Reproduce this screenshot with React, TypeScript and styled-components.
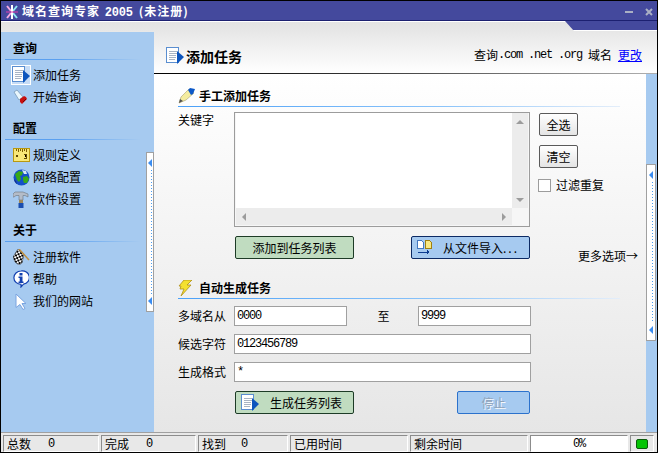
import React from 'react';
import styled, { createGlobalStyle } from 'styled-components';

const GlobalStyle = createGlobalStyle`
  html, body {
    margin: 0;
    padding: 0;
    background: #fff;
  }
  * {
    box-sizing: border-box;
  }
`;

const CJK = `'Noto Sans CJK SC', 'Liberation Sans', sans-serif`;
const MONO = `'Liberation Mono', 'Noto Sans CJK SC', monospace`;

const Window = styled.div`
  display: flex;
  flex-direction: column;
  width: 658px;
  height: 453px;
  overflow: hidden;
  border-left: 1px solid #000;
  border-right: 1px solid #000;
  border-bottom: 1px solid #000;
  background: #44499d;
  font-family: ${CJK};
  font-size: 12px;
  line-height: 16px;
  color: #000;
`;

const TitleBar = styled.div`
  display: flex;
  align-items: center;
  height: 21px;
  flex-shrink: 0;
  border-top: 1px solid #000;
  border-bottom: 1px solid #1c2070;
  padding: 3px 0 0 4px;
  background: #44499d;
`;

const TitleText = styled.span`
  margin-left: 3px;
  font-weight: 700;
  letter-spacing: 1px;
  color: #fff;
  white-space: nowrap;
`;

const TitleNum = styled.span`
  font-family: ${MONO};
  font-size: 12px;
  letter-spacing: -0.2px;
  margin: 0 6px 0 1px;
`;

const WindowButtons = styled.div`
  display: flex;
  align-items: center;
  gap: 12px;
  margin-left: auto;
  padding-right: 4px;
`;

const TopStrip = styled.div`
  height: 10px;
  flex-shrink: 0;
  background: linear-gradient(to bottom, #44499d 0, #44499d 9px, #fff 9px);
`;

const StripFace = styled.div`
  width: 573px;
  height: 100%;
  border-top: 1px solid #fff;
  background: linear-gradient(to bottom, #e3e3e3, #e7e7e7);
  clip-path: polygon(0 0, 564px 0, 573px 100%, 0 100%);
`;

const Workspace = styled.div`
  display: flex;
  flex: 1;
  min-height: 0;
  background: #e8e8e8;
`;

const Sidebar = styled.nav`
  position: relative;
  width: 153px;
  flex-shrink: 0;
  margin-top: 1px;
  padding-top: 8px;
  background: #a6caf0;
`;

const SideSection = styled.section`
  margin-bottom: 12px;
`;

const SideTitle = styled.div`
  height: 20px;
  margin: 0 14px 0 4px;
  padding-left: 8px;
  font-weight: 700;
  line-height: 16px;
  border-bottom: 1px solid transparent;
  border-image: linear-gradient(to right, #5aa0f0, #5aa0f0 40%, #a6caf0) 1;
`;

const SideList = styled.div`
  margin-top: 4px;
`;

const SideItem = styled.div`
  display: flex;
  align-items: center;
  height: 22px;
  padding-left: 10px;
`;

const SideIconBox = styled.span<{ $active?: boolean }>`
  display: flex;
  align-items: center;
  justify-content: center;
  width: 20px;
  height: 20px;
  margin-right: 2px;
  background: ${(p) => (p.$active ? '#c6dcf6' : 'transparent')};
  outline: ${(p) => (p.$active ? '1px solid #fff' : 'none')};
  outline-offset: -1px;
`;

const Splitter = styled.div`
  display: flex;
  flex-direction: column;
  align-items: center;
  justify-content: space-between;
  width: 8px;
  border: 1px solid #a0a0a0;
  background: #fff;
  padding: 6px 0;
`;

const SideSplitter = styled(Splitter)`
  position: absolute;
  right: 0;
  top: 120px;
  height: 160px;
`;

const SplitterDots = styled.div`
  flex: 1;
  width: 1px;
  margin: 3px 0 3px 2px;
  background: repeating-linear-gradient(to bottom, #4a9cf0 0, #4a9cf0 1px, transparent 1px, transparent 3px);
`;

const MainColumn = styled.div`
  display: flex;
  flex-direction: column;
  flex: 1;
  min-width: 0;
`;

const PageHeader = styled.header`
  display: flex;
  align-items: center;
  height: 42px;
  flex-shrink: 0;
  padding: 7px 15px 0 12px;
  background: linear-gradient(to bottom, #e7e7e7, #fff);
`;

const PageTitle = styled.h1`
  margin: 0 0 0 2px;
  font-size: 14px;
  line-height: 18px;
  font-weight: 700;
`;

const QueryInfo = styled.div`
  display: flex;
  align-items: center;
  margin: 0 0 1px auto;
  white-space: nowrap;
`;

const Domains = styled.span`
  font-family: ${MONO};
  font-size: 12px;
  letter-spacing: -1.2px;
  white-space: pre;
  margin-right: 6px;
`;

const ChangeLink = styled.a`
  margin-left: 6px;
  color: #0000ff;
  text-decoration: underline;
`;

const HeaderRule = styled.div`
  height: 1px;
  flex-shrink: 0;
  background: linear-gradient(to right, #000, #333 40%, #b0b0b0);
`;

const Content = styled.div`
  display: flex;
  flex: 1;
  min-height: 0;
`;

const Panel = styled.main`
  flex: 1;
  min-width: 0;
  padding: 14px 0 0 24px;
  background: linear-gradient(to bottom, #fff, #e6e6e6);
`;

const SectionHead = styled.div<{ $gap?: number }>`
  display: flex;
  align-items: center;
  width: 442px;
  height: 19px;
  margin-top: ${(p) => p.$gap ?? 0}px;
  padding-bottom: 2px;
  font-weight: 700;
  border-bottom: 1px solid transparent;
  border-image: linear-gradient(to right, #4aa0f8, #8cc4fa 60%, #e4eefa) 1;
`;

const SectionIcon = styled.span`
  display: flex;
  width: 21px;
  flex-shrink: 0;
`;

const KeywordRow = styled.div`
  display: flex;
  margin-top: 5px;
`;

const FieldLabel = styled.label`
  width: 56px;
  flex-shrink: 0;
  white-space: nowrap;
`;

const ListBox = styled.div`
  display: grid;
  grid-template-columns: 1fr 16px;
  grid-template-rows: 1fr 17px;
  width: 296px;
  height: 115px;
  padding: 0 1px 1px;
  border: 1px solid #9c9c9c;
  background: #f6f6f6;
`;

const KeywordInput = styled.textarea`
  display: block;
  width: 100%;
  height: 100%;
  border: 0;
  padding: 0;
  outline: 0;
  resize: none;
  background: #fff;
`;

const ScrollTrack = styled.div<{ $vertical?: boolean }>`
  display: flex;
  flex-direction: ${(p) => (p.$vertical ? 'column' : 'row')};
  align-items: center;
  justify-content: space-between;
  padding: ${(p) => (p.$vertical ? '6px 0 5px' : '0 5px')};
  background: #ececec;
`;

const SideActions = styled.div`
  display: flex;
  flex-direction: column;
  align-items: flex-start;
  gap: 9px;
  margin: 1px 0 0 9px;
`;

const CheckRow = styled.label`
  display: flex;
  align-items: center;
  gap: 5px;
  margin-left: -1px;
  white-space: nowrap;
`;

const CheckBox = styled.span`
  width: 13px;
  height: 13px;
  border: 1px solid #9c9c9c;
  background: #fff;
`;

const ActionButton = styled.button<{ $tone: 'plain' | 'green' | 'blue' | 'disabled'; $width: number }>`
  display: flex;
  align-items: center;
  justify-content: center;
  flex-shrink: 0;
  width: ${(p) => p.$width}px;
  height: 23px;
  padding: 0;
  font: inherit;
  border-radius: 2px;
  color: ${(p) => (p.$tone === 'disabled' ? '#8fa3bb' : '#000')};
  text-shadow: ${(p) => (p.$tone === 'disabled' ? '1px 1px 0 #f4f8fc' : 'none')};
  border: 1px solid
    ${(p) =>
      p.$tone === 'green' ? '#1d3b26' : p.$tone === 'blue' ? '#0c2a64' : p.$tone === 'disabled' ? '#2c72cc' : '#5a5a5a'};
  background: ${(p) =>
    p.$tone === 'green'
      ? '#c0dcc0'
      : p.$tone === 'plain'
        ? 'linear-gradient(to bottom, #fff, #e4e4e4)'
        : '#a6caf0'};
`;

const IconLabel = styled.span<{ $pad: number; $gap: number }>`
  display: flex;
  align-items: center;
  gap: ${(p) => p.$gap}px;
  width: 100%;
  padding-left: ${(p) => p.$pad}px;
`;

const Ellipsis = styled.span`
  letter-spacing: 2px;
`;

const ActionRow = styled.div<{ $gap?: number; $pad?: number }>`
  display: flex;
  height: 23px;
  margin-top: ${(p) => p.$gap ?? 9}px;
  padding-left: ${(p) => p.$pad ?? 57}px;
`;

const ButtonSpacer = styled.div<{ $width: number }>`
  width: ${(p) => p.$width}px;
  flex-shrink: 0;
`;

const MoreOptions = styled.span`
  display: flex;
  align-items: center;
  height: 23px;
  margin: 8px 0 0 48px;
  white-space: nowrap;
`;

const FormRows = styled.div`
  display: flex;
  flex-direction: column;
  gap: 8px;
  margin-top: 7px;
`;

const FormRow = styled.div`
  display: flex;
  align-items: center;
  height: 20px;
`;

const TextField = styled.input<{ $width: number }>`
  width: ${(p) => p.$width}px;
  height: 20px;
  padding: 0 2px;
  border: 1px solid #a0a0a0;
  outline: 0;
  background: #fff;
  font-family: ${MONO};
  font-size: 12px;
  letter-spacing: -1.2px;
`;

const ToLabel = styled.span`
  width: 71px;
  padding-left: 2px;
  text-align: center;
`;

const Rail = styled.div`
  width: 11px;
  flex-shrink: 0;
  padding-top: 90px;
  background: #a6caf0;
`;

const RailSplitter = styled(Splitter)`
  width: 10px;
  height: 177px;
`;

const StatusBar = styled.footer`
  display: flex;
  gap: 2px;
  height: 20px;
  flex-shrink: 0;
  padding: 2px 0 0 2px;
  background: #e8e8e8;
  border-top: 1px solid #a0a0a0;
`;

const StatusCell = styled.div<{ $width: number; $white?: boolean; $center?: boolean }>`
  display: flex;
  align-items: center;
  justify-content: ${(p) => (p.$center ? 'center' : 'flex-start')};
  width: ${(p) => p.$width}px;
  height: 17px;
  padding-left: ${(p) => (p.$center ? 0 : 3)}px;
  border: 1px solid;
  border-color: #8c8c8c #fff #fff #8c8c8c;
  background: ${(p) => (p.$white ? '#fff' : '#e8e8e8')};
`;

const StatusValue = styled.span<{ $gap?: number }>`
  margin-left: ${(p) => p.$gap ?? 0}px;
  font-family: ${MONO};
  font-size: 12px;
  letter-spacing: -1.2px;
`;

const Led = styled.span`
  width: 12px;
  height: 10px;
  margin-left: 2px;
  border: 1px solid #0a5a0a;
  border-radius: 2px;
  background: #04c404;
`;

const AppIcon = () => (
  <svg width="14" height="16" viewBox="0 0 14 16">
    <path d="M2 2l4 5M2 14l4-5" stroke="#f4a8e0" strokeWidth="2" fill="none" />
    <path d="M12 2L8 7M12 14L8 9" stroke="#8fe8f4" strokeWidth="2" fill="none" />
    <path d="M7 1v14" stroke="#fff" strokeWidth="2" />
    <path d="M1 8h12" stroke="#e040b0" strokeWidth="1" />
  </svg>
);

const MinimizeGlyph = () => (
  <svg width="8" height="4" viewBox="0 0 8 4">
    <rect y="1" width="8" height="2" fill="#aab0c4" />
  </svg>
);

const CloseGlyph = () => (
  <svg width="8" height="8" viewBox="0 0 8 8">
    <path d="M1 1l6 6M7 1L1 7" stroke="#aab0c4" strokeWidth="2" />
  </svg>
);

const DocIcon = ({ size = 18 }: { size?: number }) => (
  <svg width={size} height={size} viewBox="0 0 18 18" shapeRendering="crispEdges">
    <rect x="0.5" y="0.5" width="12" height="15" fill="#fff" stroke="#5a8ed0" />
    <path d="M3 4h8M3 6h8M3 8h7M3 10h7M3 12h6" stroke="#a8b4c4" />
    <path d="M11 4l7 6-7 7z" fill="#0d55bd" shapeRendering="auto" />
  </svg>
);

const TorchIcon = () => (
  <svg width="16" height="16" viewBox="0 0 16 16">
    <path d="M1 3l3-2 6 7-4 3z" fill="#e8f6fc" stroke="#7a9ab8" strokeWidth="0.8" />
    <path d="M7 10l4-3 2 1 1 2-5 5-2-2z" fill="#c81010" />
    <path d="M10 13l3-3" stroke="#700" strokeWidth="1" />
  </svg>
);

const RulerIcon = () => (
  <svg width="17" height="14" viewBox="0 0 17 14" shapeRendering="crispEdges">
    <rect x="0.5" y="0.5" width="16" height="13" fill="#f8e878" stroke="#b89810" />
    <path d="M3 1v2M5 1v3M7 1v2M9 1v3M11 1v2M13 1v3" stroke="#806000" />
    <rect x="3" y="7" width="2" height="2" fill="#604800" />
    <path d="M11 6h2v4M11 10h3" stroke="#604800" />
  </svg>
);

const GlobeIcon = () => (
  <svg width="17" height="17" viewBox="0 0 17 17">
    <circle cx="8.5" cy="8.5" r="8" fill="#1550c8" />
    <path d="M2 5l4-3 4 1-1 3-2 1 1 3-2 3-2-2-1-3zM10 8l4-1 2 3-2 4-3 0-1-3z" fill="#38a818" />
    <path d="M9 1l4 1 1 3-3 0z" fill="#d8e8f0" />
    <path d="M1 10l2 2 1 3-2-2z" fill="#143080" />
  </svg>
);

const HammerIcon = () => (
  <svg width="16" height="17" viewBox="0 0 16 17">
    <path d="M0 3l2-2h8l5 2v3l-3-1.5H10V9H6V4.5H3L1 6H0z" fill="#b4bcc8" stroke="#6c747c" strokeWidth="0.6" />
    <rect x="6" y="9" width="4" height="3" fill="#a08858" />
    <rect x="5.5" y="12" width="5" height="5" fill="#1a4eb0" />
  </svg>
);

const FlagIcon = () => (
  <svg width="17" height="16" viewBox="0 0 17 16">
    <defs>
      <pattern id="checks" width="4" height="4" patternUnits="userSpaceOnUse" patternTransform="rotate(20)">
        <rect width="4" height="4" fill="#fff" />
        <rect width="2" height="2" fill="#000" />
        <rect x="2" y="2" width="2" height="2" fill="#000" />
      </pattern>
    </defs>
    <path d="M5 0l6 5-2 9-3 2-4-3-2-5z" fill="url(#checks)" stroke="#222" strokeWidth="0.5" />
    <path d="M6 0l10 11" stroke="#c09040" strokeWidth="1.5" />
  </svg>
);

const InfoIcon = () => (
  <svg width="16" height="18" viewBox="0 0 16 18">
    <path d="M8 1a7 6.6 0 0 1 2.5 13.2L8 17v-2.6A7 6.6 0 0 1 8 1z" fill="#fff" stroke="#1240b0" strokeWidth="1.2" />
    <rect x="6.5" y="3" width="3" height="2.5" fill="#1240b0" />
    <path d="M5.5 6.5h4v5h1v1.5h-5v-1.5h1.2V8H5.5z" fill="#1240b0" />
  </svg>
);

const CursorIcon = () => (
  <svg width="12" height="17" viewBox="0 0 12 17">
    <path d="M1 1l10 9.5H7l3 5-2 1-3-5-4 3z" fill="#fff" stroke="#7aa4e0" strokeWidth="1" />
  </svg>
);

const PencilIcon = () => (
  <svg width="17" height="16" viewBox="0 0 17 16">
    <path d="M1 15l2-6 8-8 5 4-8 7z" fill="#f4eca0" stroke="#a8a070" strokeWidth="0.6" />
    <path d="M10 2l2-2 5 1-2 5-2 1z" fill="#0c58c8" />
    <path d="M1 15l1-4 3 2z" fill="#505050" />
  </svg>
);

const BoltIcon = () => (
  <svg width="14" height="16" viewBox="0 0 14 16">
    <path d="M6 0h8l-5 5h4L3 16l3-7H2l1-3H1z" fill="#f4e030" stroke="#b09018" strokeWidth="0.8" />
  </svg>
);

const FilesIcon = () => (
  <svg width="15" height="15" viewBox="0 0 15 15" shapeRendering="crispEdges">
    <path d="M0.5 0.5h4l2 2v6h-6z" fill="#fff" stroke="#4478c0" />
    <path d="M8.5 0.5h4l2 2v6h-6z" fill="#f8e880" stroke="#a08010" />
    <path d="M1 12h11" stroke="#0c3c90" />
    <path d="M10 10l3 2-3 2z" fill="#0c3c90" />
  </svg>
);

const ArrowGlyph = ({ dir, color = '#9c9c9c' }: { dir: 'up' | 'down' | 'left' | 'right'; color?: string }) => {
  const points = { up: '0,5 4,1 8,5', down: '0,1 8,1 4,5', left: '5,0 5,8 1,4', right: '1,0 1,8 5,4' }[dir];
  const wide = dir === 'up' || dir === 'down';
  return (
    <svg width={wide ? 8 : 6} height={wide ? 6 : 8} viewBox={wide ? '0 0 8 6' : '0 0 6 8'}>
      <polygon points={points} fill={color} />
    </svg>
  );
};

const sideGroups = [
  {
    title: '查询',
    items: [
      { label: '添加任务', icon: <DocIcon />, active: true },
      { label: '开始查询', icon: <TorchIcon /> },
    ],
  },
  {
    title: '配置',
    items: [
      { label: '规则定义', icon: <RulerIcon /> },
      { label: '网络配置', icon: <GlobeIcon /> },
      { label: '软件设置', icon: <HammerIcon /> },
    ],
  },
  {
    title: '关于',
    items: [
      { label: '注册软件', icon: <FlagIcon /> },
      { label: '帮助', icon: <InfoIcon /> },
      { label: '我们的网站', icon: <CursorIcon /> },
    ],
  },
];

const statusCells = [
  { label: '总数', value: '0', width: 96, gap: 17 },
  { label: '完成', value: '0', width: 95, gap: 17 },
  { label: '找到', value: '0', width: 90, gap: 15 },
  { label: '已用时间', width: 118 },
  { label: '剩余时间', width: 118 },
];

const SplitterMarks = () => (
  <>
    <ArrowGlyph dir="left" color="#3a8cf0" />
    <SplitterDots />
    <ArrowGlyph dir="left" color="#3a8cf0" />
  </>
);

export default function App() {
  return (
    <>
      <GlobalStyle />
      <Window>
        <TitleBar>
          <AppIcon />
          <TitleText>
            域名查询专家 <TitleNum>2005</TitleNum>(未注册)
          </TitleText>
          <WindowButtons>
            <MinimizeGlyph />
            <CloseGlyph />
          </WindowButtons>
        </TitleBar>
        <TopStrip>
          <StripFace />
        </TopStrip>
        <Workspace>
          <Sidebar>
            {sideGroups.map((group) => (
              <SideSection key={group.title}>
                <SideTitle>{group.title}</SideTitle>
                <SideList>
                  {group.items.map((item) => (
                    <SideItem key={item.label}>
                      <SideIconBox $active={item.active}>{item.icon}</SideIconBox>
                      {item.label}
                    </SideItem>
                  ))}
                </SideList>
              </SideSection>
            ))}
            <SideSplitter>
              <SplitterMarks />
            </SideSplitter>
          </Sidebar>
          <MainColumn>
            <PageHeader>
              <DocIcon />
              <PageTitle>添加任务</PageTitle>
              <QueryInfo>
                查询<Domains>.com .net .org</Domains>域名
                <ChangeLink href="#">更改</ChangeLink>
              </QueryInfo>
            </PageHeader>
            <HeaderRule />
            <Content>
              <Panel>
                <SectionHead>
                  <SectionIcon>
                    <PencilIcon />
                  </SectionIcon>
                  手工添加任务
                </SectionHead>
                <KeywordRow>
                  <FieldLabel>关键字</FieldLabel>
                  <ListBox>
                    <KeywordInput />
                    <ScrollTrack $vertical>
                      <ArrowGlyph dir="up" />
                      <ArrowGlyph dir="down" />
                    </ScrollTrack>
                    <ScrollTrack>
                      <ArrowGlyph dir="left" />
                      <ArrowGlyph dir="right" />
                    </ScrollTrack>
                  </ListBox>
                  <SideActions>
                    <ActionButton $tone="plain" $width={39}>全选</ActionButton>
                    <ActionButton $tone="plain" $width={39}>清空</ActionButton>
                    <CheckRow>
                      <CheckBox />
                      过滤重复
                    </CheckRow>
                  </SideActions>
                </KeywordRow>
                <ActionRow>
                  <ActionButton $tone="green" $width={119}>添加到任务列表</ActionButton>
                  <ButtonSpacer $width={57} />
                  <ActionButton $tone="blue" $width={119}>
                    <IconLabel $pad={5} $gap={11}>
                      <FilesIcon />
                      <span>
                        从文件导入<Ellipsis>...</Ellipsis>
                      </span>
                    </IconLabel>
                  </ActionButton>
                  <MoreOptions>更多选项→</MoreOptions>
                </ActionRow>
                <SectionHead $gap={21}>
                  <SectionIcon>
                    <BoltIcon />
                  </SectionIcon>
                  自动生成任务
                </SectionHead>
                <FormRows>
                  <FormRow>
                    <FieldLabel>多域名从</FieldLabel>
                    <TextField $width={113} defaultValue="0000" />
                    <ToLabel>至</ToLabel>
                    <TextField $width={113} defaultValue="9999" />
                  </FormRow>
                  <FormRow>
                    <FieldLabel>候选字符</FieldLabel>
                    <TextField $width={297} defaultValue="0123456789" />
                  </FormRow>
                  <FormRow>
                    <FieldLabel>生成格式</FieldLabel>
                    <TextField $width={297} defaultValue="*" />
                  </FormRow>
                </FormRows>
                <ActionRow>
                  <ActionButton $tone="green" $width={119}>
                    <IconLabel $pad={5} $gap={11}>
                      <DocIcon />
                      生成任务列表
                    </IconLabel>
                  </ActionButton>
                  <ButtonSpacer $width={103} />
                  <ActionButton $tone="disabled" $width={73}>停止</ActionButton>
                </ActionRow>
              </Panel>
              <Rail>
                <RailSplitter>
                  <SplitterMarks />
                </RailSplitter>
              </Rail>
            </Content>
          </MainColumn>
        </Workspace>
        <StatusBar>
          {statusCells.map((cell) => (
            <StatusCell key={cell.label} $width={cell.width}>
              {cell.label}
              {cell.value && <StatusValue $gap={cell.gap}>{cell.value}</StatusValue>}
            </StatusCell>
          ))}
          <StatusCell $width={98} $white $center>
            <StatusValue>0%</StatusValue>
          </StatusCell>
          <StatusCell $width={24}>
            <Led />
          </StatusCell>
        </StatusBar>
      </Window>
    </>
  );
}
